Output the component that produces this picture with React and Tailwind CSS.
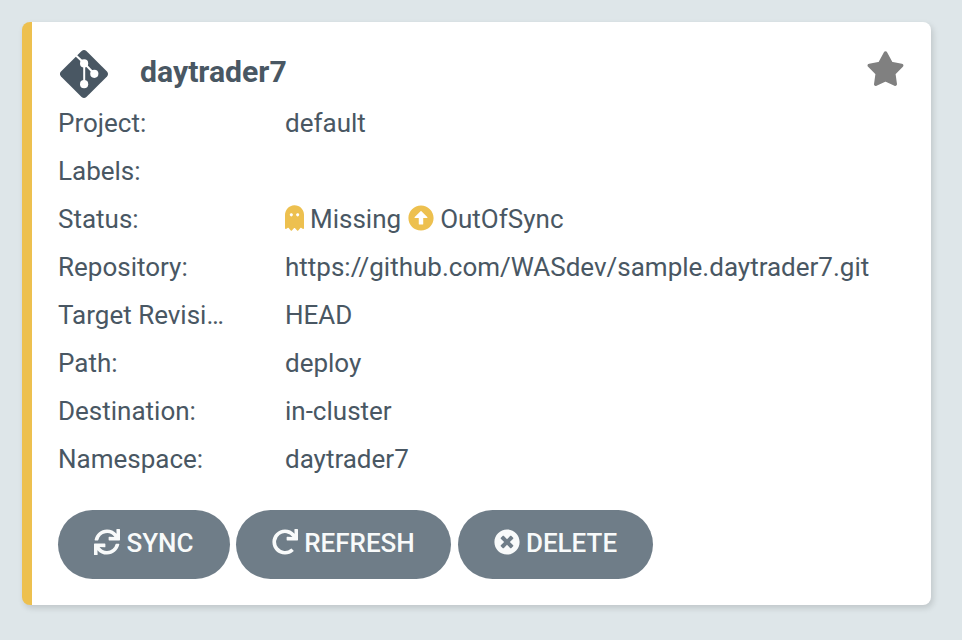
import React from 'react';
import { FaGhost, FaArrowAltCircleUp, FaSync, FaRedo, FaTimesCircle } from 'react-icons/fa';

function GitIcon({ className }) {
  return (
    <svg viewBox="0 0 48 48" className={className}>
      <path
        d="M21.6 1 L1 21.6 Q-1.2 24 1 26.4 L21.6 47 Q24 49 26.4 47 L47 26.4 Q49 24 47 21.6 L26.4 1 Q24 -1 21.6 1Z"
        fill="currentColor"
      />
      <g stroke="#fff" strokeWidth="2" fill="none">
        <path d="M16 5.5 L24 13 L34 23.5" />
        <path d="M24.2 13 V34" />
      </g>
      <g fill="#fff">
        <circle cx="24.1" cy="13.4" r="4.1" />
        <circle cx="34.3" cy="23.8" r="4.1" />
        <circle cx="24.1" cy="34.2" r="4.1" />
      </g>
    </svg>
  );
}

function StarIcon({ className }) {
  return (
    <svg viewBox="0 0 37 36" className={className}>
      <path
        d="M18.5 2.2 L24.2 12.6 L34.6 14.4 L26.7 22.4 L28.2 33.2 L18.5 28.6 L8.8 33.2 L10.3 22.4 L2.4 14.4 L12.8 12.6Z"
        fill="currentColor"
        stroke="currentColor"
        strokeWidth="3.6"
        strokeLinejoin="round"
      />
    </svg>
  );
}

function Row({ label, children }) {
  return (
    <div className="flex h-12 items-center">
      <div className="w-[227px] shrink-0 whitespace-nowrap">{label}</div>
      <div className="flex items-center whitespace-nowrap">{children}</div>
    </div>
  );
}

function Action({ icon: Icon, label, className }) {
  return (
    <button
      className={`flex h-[69px] items-center justify-center gap-1.5 rounded-full bg-[#6f7d88] pb-1 text-[26px] font-medium text-[#f8fafa] ${className}`}
    >
      <Icon className="mb-px h-[26px] w-[26px]" />
      <span>{label}</span>
    </button>
  );
}

export default function App() {
  return (
    <div className="h-[640px] w-[962px] bg-[#dee6e9] px-[22px] pt-[22px] font-[Roboto,sans-serif] text-[26px] leading-[48px] text-[#495763]">
      <div className="h-[583px] w-[909px] rounded-lg border-l-[10px] border-[#edc04f] bg-white pl-[26px] pt-[26px] shadow-[2px_3px_6px_rgba(0,0,0,0.14)]">
        <div className="flex h-[51px] items-center pr-[27px]">
          <GitIcon className="ml-0.5 mt-px h-12 w-12" />
          <h1 className="ml-8 flex-1 pb-[3px] text-[30.2px] font-bold">daytrader7</h1>
          <StarIcon className="mb-[9px] h-[36px] w-[37px] text-[#808080]" />
        </div>
        <Row label="Project:">default</Row>
        <Row label="Labels:" />
        <Row label="Status:">
          <FaGhost className="mb-0.5 h-[26px] w-[19px]" color="#edc04f" />
          <span className="ml-1.5">Missing</span>
          <FaArrowAltCircleUp className="mb-0.5 ml-[7px] h-[26px] w-[26px] text-[#edc04f]" />
          <span className="ml-1.5">OutOfSync</span>
        </Row>
        <Row label="Repository:">https://github.com/WASdev/sample.daytrader7.git</Row>
        <Row label="Target Revisi…">HEAD</Row>
        <Row label="Path:">deploy</Row>
        <Row label="Destination:">in-cluster</Row>
        <Row label="Namespace:">daytrader7</Row>
        <div className="mt-[27px] flex">
          <Action icon={FaSync} label="SYNC" className="w-[172px]" />
          <Action icon={FaRedo} label="REFRESH" className="ml-1.5 w-[215px]" />
          <Action icon={FaTimesCircle} label="DELETE" className="ml-[7px] w-[195px]" />
        </div>
      </div>
    </div>
  );
}
